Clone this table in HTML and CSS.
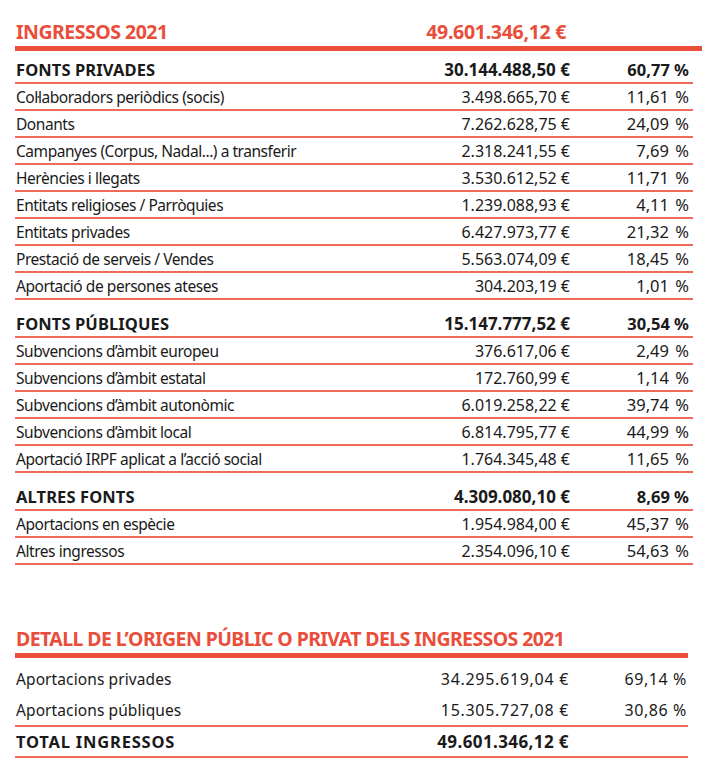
FILE: index.html
```html
<!DOCTYPE html>
<html lang="ca">
<head>
<meta charset="utf-8">
<link rel="stylesheet" href="styles.css">
</head>
<body>
<div class="page">
  <section class="table main">
    <div class="title-row">
      <div class="title">INGRESSOS 2021</div>
      <div class="title-amount">49.601.346,12 €</div>
    </div>
    <div class="bar"></div>

    <div class="group">
      <div class="row head"><span class="lbl">FONTS PRIVADES</span><span class="num">30.144.488,50 €</span><span class="pct">60,77 %</span></div>
      <div class="row"><span class="lbl">Col·laboradors periòdics (socis)</span><span class="num">3.498.665,70 €</span><span class="pct">11,61 %</span></div>
      <div class="row"><span class="lbl">Donants</span><span class="num">7.262.628,75 €</span><span class="pct">24,09 %</span></div>
      <div class="row"><span class="lbl">Campanyes (Corpus, Nadal...) a transferir</span><span class="num">2.318.241,55 €</span><span class="pct">7,69 %</span></div>
      <div class="row"><span class="lbl">Herències i llegats</span><span class="num">3.530.612,52 €</span><span class="pct">11,71 %</span></div>
      <div class="row"><span class="lbl">Entitats religioses / Parròquies</span><span class="num">1.239.088,93 €</span><span class="pct">4,11 %</span></div>
      <div class="row"><span class="lbl">Entitats privades</span><span class="num">6.427.973,77 €</span><span class="pct">21,32 %</span></div>
      <div class="row"><span class="lbl">Prestació de serveis / Vendes</span><span class="num">5.563.074,09 €</span><span class="pct">18,45 %</span></div>
      <div class="row"><span class="lbl">Aportació de persones ateses</span><span class="num">304.203,19 €</span><span class="pct">1,01 %</span></div>
    </div>

    <div class="group">
      <div class="row head"><span class="lbl">FONTS PÚBLIQUES</span><span class="num">15.147.777,52 €</span><span class="pct">30,54 %</span></div>
      <div class="row"><span class="lbl">Subvencions d’àmbit europeu</span><span class="num">376.617,06 €</span><span class="pct">2,49 %</span></div>
      <div class="row"><span class="lbl">Subvencions d’àmbit estatal</span><span class="num">172.760,99 €</span><span class="pct">1,14 %</span></div>
      <div class="row"><span class="lbl">Subvencions d’àmbit autonòmic</span><span class="num">6.019.258,22 €</span><span class="pct">39,74 %</span></div>
      <div class="row"><span class="lbl">Subvencions d’àmbit local</span><span class="num">6.814.795,77 €</span><span class="pct">44,99 %</span></div>
      <div class="row"><span class="lbl">Aportació IRPF aplicat a l’acció social</span><span class="num">1.764.345,48 €</span><span class="pct">11,65 %</span></div>
    </div>

    <div class="group">
      <div class="row head"><span class="lbl">ALTRES FONTS</span><span class="num">4.309.080,10 €</span><span class="pct">8,69 %</span></div>
      <div class="row"><span class="lbl">Aportacions en espècie</span><span class="num">1.954.984,00 €</span><span class="pct">45,37 %</span></div>
      <div class="row"><span class="lbl">Altres ingressos</span><span class="num">2.354.096,10 €</span><span class="pct">54,63 %</span></div>
    </div>
  </section>

  <section class="table detail">
    <div class="title-row">
      <div class="title">DETALL DE L’ORIGEN PÚBLIC O PRIVAT DELS INGRESSOS 2021</div>
    </div>
    <div class="bar"></div>
    <div class="row plain"><span class="lbl">Aportacions privades</span><span class="num">34.295.619,04 €</span><span class="pct">69,14 %</span></div>
    <div class="row"><span class="lbl">Aportacions públiques</span><span class="num">15.305.727,08 €</span><span class="pct">30,86 %</span></div>
    <div class="row head"><span class="lbl">TOTAL INGRESSOS</span><span class="num">49.601.346,12 €</span><span class="pct"></span></div>
  </section>
</div>
</body>
</html>
```

FILE: styles.css
```css
* { box-sizing: border-box; }
html, body {
  margin: 0;
  padding: 0;
  background: #ffffff;
}
body {
  font-family: "Noto Sans", "DejaVu Sans Condensed", sans-serif;
  font-stretch: condensed;
  color: #1a1a1a;
}
.page {
  padding: 17px 0 0 15px;
  width: 716px;
}
.main {
  width: 687px;
}
.title-row {
  display: flex;
  align-items: baseline;
  height: 29px;
  padding-left: 1px;
  white-space: nowrap;
}
.title {
  color: #e94e3b;
  font-weight: bold;
  font-size: 19.5px;
  letter-spacing: -0.5px;
  line-height: 29px;
  width: 404px;
}
.title-amount {
  color: #e94e3b;
  font-weight: bold;
  font-size: 19.5px;
  letter-spacing: -0.3px;
  width: 146px;
  text-align: right;
}
.bar {
  height: 5px;
  background: #e94e3b;
}
.main .bar {
  margin-bottom: 6px;
}
.group {
  width: 678px;
  margin-bottom: 11px;
}
.row {
  display: grid;
  grid-template-columns: 1fr 150px 119px;
  height: 27px;
  align-items: center;
  white-space: nowrap;
  padding: 0 4px 0 1px;
  border-bottom: 2px solid #ee6b5b;
}
.lbl {
  font-size: 15.5px;
  letter-spacing: -0.45px;
}
.num {
  font-size: 16px;
  text-align: right;
}
.pct {
  font-size: 16.5px;
  word-spacing: 2px;
  text-align: right;
}
.row.head {
  font-weight: bold;
}
.row.head .lbl {
  font-size: 16.5px;
  letter-spacing: 0.1px;
}
.row.head .num {
  font-size: 17px;
}
.row.head .pct {
  word-spacing: 0;
}
.detail {
  margin-top: 59px;
  width: 673px;
}
.detail .title {
  width: auto;
  letter-spacing: -0.6px;
}
.detail .bar {
  margin-bottom: 5px;
}
.detail .row {
  height: 32px;
  padding-right: 1px;
  grid-template-columns: 1fr 150px 118px;
}
.detail .lbl {
  letter-spacing: 0.1px;
}
.detail .num {
  letter-spacing: 0.7px;
}
.detail .pct {
  font-size: 16px;
  letter-spacing: 0.6px;
  word-spacing: 0;
}
.detail .row.plain {
  border-bottom: none;
}
.detail .row.head {
  height: 31px;
}
.detail .row.head .lbl {
  letter-spacing: 0.8px;
}
.detail .row.head .num {
  letter-spacing: 0.4px;
}
```
